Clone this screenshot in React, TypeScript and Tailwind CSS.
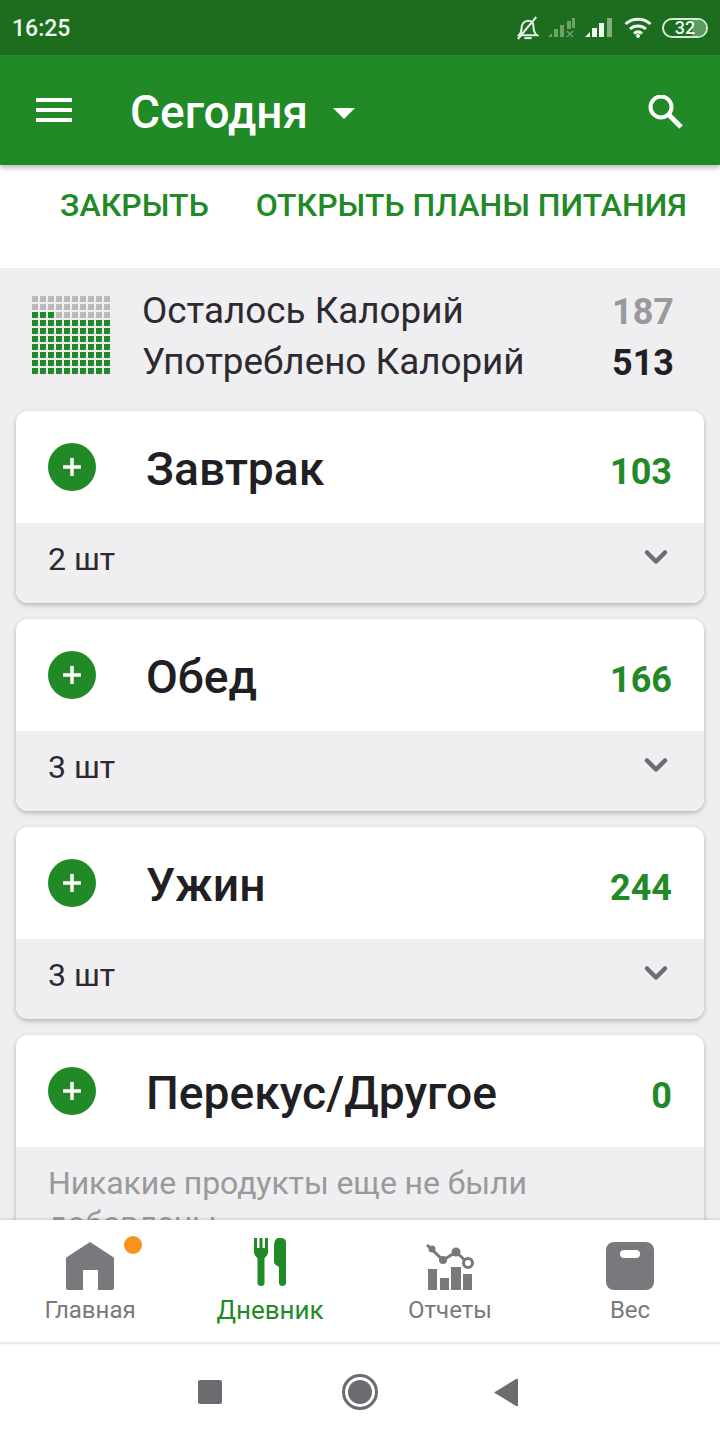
import { ChevronDown } from 'lucide-react';

const meals = [
  { name: 'Завтрак', total: 103, count: '2 шт' },
  { name: 'Обед', total: 166, count: '3 шт' },
  { name: 'Ужин', total: 244, count: '3 шт' },
];

const GREEN = 'text-[#218a26]';

function StatusIcons() {
  return (
    <div className="flex items-center">
      <svg width="22" height="24" viewBox="0 0 24 26" fill="none" stroke="#e4efe4" strokeWidth="2.2" className="mr-[9px]">
        <path d="M2 21c2-2 3-4 3-8 0-4 3-8 7-8s6 3 6 7c0 4 1 7 4 9z" />
        <path d="M1 25 21 1" />
        <path d="M8 24h8" />
      </svg>
      <svg width="28" height="20" viewBox="0 0 28 20" fill="#e4efe4" opacity="0.4" className="mr-[9px]">
        <path d="M0 19 4 15v4z" />
        <rect x="6" y="11" width="4" height="8" />
        <rect x="12" y="7" width="4" height="12" />
        <rect x="19" y="3" width="4" height="8" />
        <rect x="24" y="0" width="3" height="10" />
        <path d="M18 13h2l2 2 2-2h2l-3 3 3 3h-2l-2-2-2 2h-2l3-3z" />
      </svg>
      <svg width="28" height="20" viewBox="0 0 28 20" className="mr-[11px]">
        <path d="M0 19 5 14v5z" fill="#f2f7f2" />
        <rect x="7" y="10" width="5" height="9" fill="#f2f7f2" />
        <rect x="14" y="5" width="5" height="14" fill="#f2f7f2" />
        <rect x="22" y="0" width="5" height="19" fill="#e4efe4" opacity="0.5" />
      </svg>
      <svg width="28" height="21" viewBox="0 0 28 21" fill="none" stroke="#f2f7f2" strokeWidth="3" className="mr-[10px]">
        <path d="M1.500 7c7-6.500 18-6.500 25 0" />
        <path d="M6 12c4.500-4 11.500-4 16 0" />
        <path d="M10 16.500c2.500-2 5.500-2 8 0" />
        <circle cx="14" cy="19" r="2" fill="#f2f7f2" stroke="none" />
      </svg>
      <div className="relative flex h-[20px] w-[46px] items-center justify-center overflow-hidden rounded-full border-2 border-[#d8e8d8]">
        <div className="absolute inset-y-0 right-0 w-[14px] rounded-r-full bg-[#5d9c60]" />
        <span className="relative text-[18px] leading-none font-medium text-[#f2f7f2]">32</span>
      </div>
    </div>
  );
}

function CalorieGrid() {
  const cells = Array.from({ length: 100 }, (_, i) => i);
  return (
    <div className="grid w-[78px] shrink-0 grid-cols-[repeat(10,6px)] grid-rows-[repeat(10,6px)] gap-[2px]">
      {cells.map((i) => (
        <div key={i} className={i < 20 || (i >= 23 && i < 30) ? 'bg-[#bab9bc]' : 'bg-[#218a26]'} />
      ))}
    </div>
  );
}

function AddButton() {
  return (
    <div className="flex h-[48px] w-[48px] shrink-0 items-center justify-center rounded-full bg-[#218a26]">
      <svg width="20" height="20" viewBox="0 0 20 20" fill="#fff">
        <rect x="8.250" y="1" width="3.500" height="18" />
        <rect x="1" y="8.250" width="18" height="3.500" />
      </svg>
    </div>
  );
}

function MealHeader({ name, total }: { name: string; total: number }) {
  return (
    <div className="flex h-[112px] bg-white pl-[32px] pr-[32px]">
      <div className="pt-[32px]">
        <AddButton />
      </div>
      <div className="ml-[50px] flex-1 pt-[28px] text-[46.2px] leading-[60px] font-medium text-[#211f24]">{name}</div>
      <div className={`pt-[37px] text-[36px] leading-[48px] font-bold ${GREEN}`}>{total}</div>
    </div>
  );
}

function NavItem({ icon, label, active }: { icon: React.ReactNode; label: string; active?: boolean }) {
  return (
    <div className="flex w-[180px] flex-col items-center pt-[21px]">
      <div className="flex h-[50px] items-center justify-center">{icon}</div>
      <div className={`mt-[3px] leading-[32px] ${active ? `text-[26px] ${GREEN}` : 'text-[24px] text-[#7a787d]'}`}>{label}</div>
    </div>
  );
}

export default function App() {
  return (
    <div className="flex h-[1440px] w-[720px] flex-col overflow-hidden bg-white font-['Roboto',sans-serif]">
      {/* Status bar */}
      <div className="flex h-[55px] shrink-0 items-center justify-between bg-[#1c6d1e] pl-[12px] pr-[12px]">
        <span className="pt-[3px] text-[23px] font-medium text-[#f0f5f0]">16:25</span>
        <StatusIcons />
      </div>

      {/* Toolbar */}
      <div className="relative z-10 flex h-[110px] shrink-0 items-center bg-[#218a26] pl-[36px] pr-[36px] shadow-[0_3px_5px_rgba(0,0,0,0.25)]">
        <svg width="36" height="24" viewBox="0 0 36 24" fill="#fff">
          <rect y="0" width="36" height="4" />
          <rect y="10" width="36" height="4" />
          <rect y="20" width="36" height="4" />
        </svg>
        <span className="ml-[58px] mt-[4px] text-[46px] font-medium text-white">Сегодня</span>
        <svg width="22" height="11" viewBox="0 0 22 11" className="ml-[25px] mt-[6px]">
          <path d="M0 0h22L11 11z" fill="#fff" />
        </svg>
        <svg width="36" height="34" viewBox="0 0 36 34" fill="none" stroke="#fff" className="ml-auto mt-[4px]">
          <circle cx="13" cy="12" r="10.500" strokeWidth="4" />
          <path d="M20 19 33 32" strokeWidth="5" />
        </svg>
      </div>

      {/* Upsell */}
      <div className="flex h-[103px] shrink-0 bg-white pl-[60px] pt-[20px]">
        <span className={`text-[32px] leading-[40px] font-medium ${GREEN}`}>ЗАКРЫТЬ</span>
        <span className={`ml-[47px] text-[32px] leading-[40px] font-medium ${GREEN}`}>ОТКРЫТЬ ПЛАНЫ ПИТАНИЯ</span>
      </div>

      <div className="min-h-0 flex-1 overflow-hidden bg-[#efeef1]">
        {/* Summary */}
        <div className="flex h-[143px] items-start pl-[32px] pr-[46px] pt-[28px]">
          <CalorieGrid />
          <div className="-mt-[11px] ml-[32px] flex-1 text-[36.8px] leading-[51px] text-[#2c2a2f]">
            <div>Осталось Калорий</div>
            <div>Употреблено Калорий</div>
          </div>
          <div className="-mt-[9px] text-right text-[36px] leading-[51px] font-bold">
            <div className="text-[#9a999c]">187</div>
            <div className="text-[#211f24]">513</div>
          </div>
        </div>

        {/* Meals */}
        <div className="flex flex-col gap-[16px] px-[16px]">
          {meals.map((meal) => (
            <div key={meal.name} className="overflow-hidden rounded-[12px] shadow-[0_2px_5px_rgba(0,0,0,0.25)]">
              <MealHeader name={meal.name} total={meal.total} />
              <div className="flex h-[80px] justify-between bg-[#efeef1] pl-[32px] pr-[32px] pt-[16px]">
                <span className="text-[32px] leading-[40px] text-[#2c2a2f]">{meal.count}</span>
                <ChevronDown size={36} strokeWidth={3} color="#6f6d72" className="-mr-[2px]" />
              </div>
            </div>
          ))}
          <div className="overflow-hidden rounded-t-[12px] shadow-[0_2px_5px_rgba(0,0,0,0.25)]">
            <MealHeader name="Перекус/Другое" total={0} />
            <div className="h-[120px] bg-[#efeef1] pl-[32px] pr-[32px] pt-[16px] text-[32px] leading-[40px] tracking-[-0.1px] text-[#9a999c]">
              Никакие продукты еще не были добавлены
            </div>
          </div>
        </div>
      </div>

      {/* Bottom navigation */}
      <div className="relative z-10 flex h-[124px] shrink-0 border-b-2 border-[#ebebeb] bg-white shadow-[0_-1px_3px_rgba(0,0,0,0.15)]">
        <NavItem
          label="Главная"
          icon={
            <div className="relative">
              <svg width="48" height="48" viewBox="0 0 48 48" fill="#7a787d" className="block">
                <path fillRule="evenodd" d="M24 0 47 15a2 2 0 0 1 1 2v29a2 2 0 0 1-2 2H32V28H17v20H2a2 2 0 0 1-2-2V17a2 2 0 0 1 1-2z" />
              </svg>
              <div className="absolute -right-[28px] -top-[6px] h-[18px] w-[18px] rounded-full bg-[#f6921e]" />
            </div>
          }
        />
        <NavItem
          active
          label="Дневник"
          icon={
            <svg width="32" height="48" viewBox="0 0 32 48" fill="#218a26" className="-mt-[8px]">
              <path d="M0 0h3v10h2.500V0h3v10H11V0h3v14c0 3-2 5-3.500 6v25a3.500 3 0 0 1-7 0V20C2 19 0 17 0 14z" />
              <path d="M24 0h3c3 0 5 2 5 4v41c0 2-1.500 3-3.500 3S25 47 25 45V29l-3-2c-1-.7-2-1.500-2-3V8c0-4 2-8 4-8z" />
            </svg>
          }
        />
        <NavItem
          label="Отчеты"
          icon={
            <svg width="48" height="46" viewBox="0 0 48 46" fill="#7a787d" className="mt-[2px]">
              <rect x="2" y="25" width="9" height="21" />
              <rect x="14" y="34" width="9" height="12" />
              <rect x="25" y="23" width="10" height="23" />
              <rect x="37" y="30" width="9" height="16" />
              <path d="M1 1 17 16 30 8 42 19" fill="none" stroke="#7a787d" strokeWidth="3" />
              <circle cx="6" cy="5" r="3.500" />
              <circle cx="17" cy="16" r="4" />
              <circle cx="30" cy="8" r="4.500" />
              <circle cx="42" cy="19" r="4.500" fill="#fff" stroke="#7a787d" strokeWidth="3" />
            </svg>
          }
        />
        <NavItem
          label="Вес"
          icon={
            <svg width="48" height="48" viewBox="0 0 48 48">
              <path
                fill="#7a787d"
                fillRule="evenodd"
                d="M8 0h32a8 8 0 0 1 8 8v32a8 8 0 0 1-8 8H8a8 8 0 0 1-8-8V8a8 8 0 0 1 8-8zM18 8a4 4 0 0 0 0 8h12a4 4 0 0 0 0-8z"
              />
            </svg>
          }
        />
      </div>

      {/* Android nav bar */}
      <div className="flex h-[96px] shrink-0 items-center bg-white">
        <div className="ml-[198px] h-[24px] w-[24px] rounded-[2px] bg-[#6d6b70]" />
        <div className="ml-[120px] flex h-[36px] w-[36px] items-center justify-center rounded-full border-[3px] border-[#6d6b70]">
          <div className="h-[24px] w-[24px] rounded-full bg-[#6d6b70]" />
        </div>
        <svg width="24" height="27" viewBox="0 0 24 27" className="ml-[116px]">
          <path d="M0 13.500 22 0a1 1 0 0 1 2 1v25a1 1 0 0 1-2 1z" fill="#6d6b70" />
        </svg>
      </div>
    </div>
  );
}
